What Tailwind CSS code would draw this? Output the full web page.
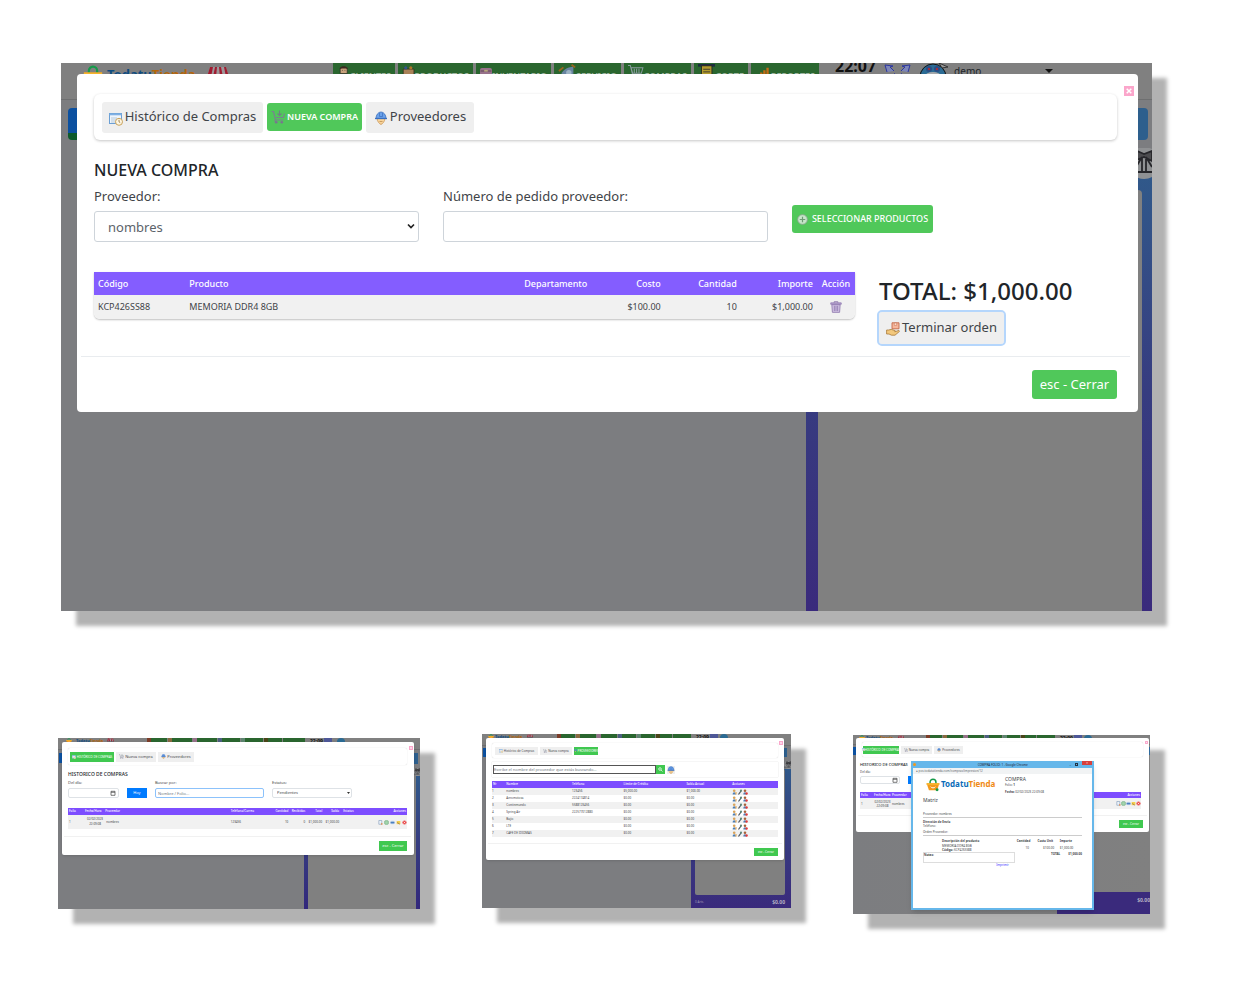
<!DOCTYPE html>
<html lang="es">
<head>
<meta charset="utf-8">
<meta name="viewport" content="width=device-width, initial-scale=1">
<title>TodatuTienda - Compras</title>
<script src="https://cdn.jsdelivr.net/npm/@tailwindcss/browser@4"></script>
</head>
<body class="bg-white font-['Noto_Sans','Open_Sans',sans-serif] text-[#3f4448]">

<!-- Shared icons -->
<svg class="hidden">
  <symbol id="i-history" viewBox="0 0 14 14"><rect x=".5" y="1.5" width="12" height="10" fill="#eef5fc" stroke="#6b9fd4"/><path d="M.5 1.5h12v1.800H.5z" fill="#7fb0e4"/><path d="M2 6h6M2 8h5M2 10h4" stroke="#a9bfd4" stroke-width=".8"/><circle cx="10" cy="9.800" r="3.500" fill="#fdf6e3" stroke="#c9a25a"/><path d="M10 7.800v2l1.200.8" stroke="#8a6a3a" fill="none" stroke-width=".8"/></symbol>
  <symbol id="i-cart" viewBox="0 0 14 14"><path d="M.5 1.500h2l2 8.500h8M4.500 10l-.8 1.500" fill="none" stroke="#7a7f92" stroke-width="1.200"/><path d="M5 7.500h7.500l1-4" fill="none" stroke="#7a7f92" stroke-width="1.100"/><path d="M8.500.5v4.800M6.500 3.500l2 2 2-2" fill="none" stroke="#6f7f86" stroke-width="1.100"/><circle cx="5.200" cy="12.200" r="1.300" fill="#7a7390"/><circle cx="10.800" cy="12.200" r="1.300" fill="#7a7390"/></symbol>
  <symbol id="i-worker" viewBox="0 0 14 14"><path d="M3 7.500h8c0 2.500-2.500 5.500-4 6-1.500-.5-4-3.500-4-6z" fill="#f8d49a" stroke="#c9975a" stroke-width=".8"/><path d="M2 7.500a5 6.500 0 0 1 10 0z" fill="#6ba2ea" stroke="#3a6fbe" stroke-width=".8"/><path d="M1 7.500h12" stroke="#3a6fbe" stroke-width="1.300"/><path d="M5.500 2v3.500h3V2" fill="none" stroke="#3a6fbe" stroke-width=".7"/><path d="M5.500 10.500h3" stroke="#b5844a" stroke-width=".7"/></symbol>
  <symbol id="i-plus" viewBox="0 0 12 12"><circle cx="6" cy="6" r="5.300" fill="#c5e6c8" stroke="#8aa58e"/><path d="M6 3v6M3 6h6" stroke="#6d9a74" stroke-width="1.300"/></symbol>
  <symbol id="i-trash" viewBox="0 0 13 13"><path d="M4.500 2V.8h4V2" fill="none" stroke="#8d76ad"/><path d="M.8 2h11.400v1.600H.8z" fill="#b9a6d2" stroke="#8d76ad" stroke-width=".8"/><path d="M2 4h9l-.6 8.300H2.600z" fill="#d2c4e4" stroke="#8d76ad" stroke-width=".9"/><path d="M4.700 5.200v5.800M6.500 5.200v5.800M8.300 5.200v5.800" stroke="#8d76ad" stroke-width=".9"/></symbol>
  <symbol id="i-hand" viewBox="0 0 14 14"><path d="M6 .8h7v6H6z" fill="#f6b79c" stroke="#c4694a" stroke-width=".9"/><path d="M8.300 1h2.400v2.400H8.300z" fill="#fbe1d0" stroke="#c4694a" stroke-width=".5"/><path d="M.6 8h2l2.600-.6 4 1.200-.4 1.200 4-1.400.8.900-4.600 3.900H5.500L3 12H.6z" fill="#f3c87c" stroke="#a87838" stroke-width=".8"/></symbol>
  <symbol id="i-bag" viewBox="0 0 24 24"><path d="M7 10V7a5 5 0 0 1 10 0v3" fill="none" stroke="#169a4a" stroke-width="2.600"/><path d="M1 9h22l-4 12H5z" fill="#f39a1c"/><path d="M1 9h22v3H1z" fill="#f7b42c"/><path d="M8 15a4.500 3.500 0 0 0 8 0" fill="none" stroke="#fff" stroke-width="1.600"/><circle cx="19" cy="20" r="2.500" fill="#169a4a"/></symbol>
  <symbol id="i-awning" viewBox="0 0 22 16"><path d="M3 1h16l3 10H0z" fill="#9d979a"/><path d="M3 1h3l-2 10H0zM8 1h2l-1 10H6zM12 1h2l2 10h-3zM17 1h2l3 10h-3z" fill="#a01c30"/><path d="M1 11h20v5H1z" fill="#5a5a5e"/></symbol>
  <symbol id="i-cal" viewBox="0 0 6 6"><path d="M1 1.300h4v4H1zM1 2.300h4" fill="none" stroke="#444" stroke-width=".7"/></symbol>
  <symbol id="i-doc" viewBox="0 0 6 6"><path d="M1 .6h3.500v4.500H1z" fill="#eef4fb" stroke="#6a89ad" stroke-width=".6"/><circle cx="4.500" cy="4.700" r="1" fill="#e0905a"/></symbol>
  <symbol id="i-recv" viewBox="0 0 6 6"><rect x=".8" y=".8" width="4.400" height="4.400" rx="1" fill="#a4d4ae" stroke="#4f9a60" stroke-width=".6"/></symbol>
  <symbol id="i-print" viewBox="0 0 6 6"><path d="M1.500.8h3v4.400h-3z" fill="#d5e4f3"/><path d="M.6 2h4.800v2.200H.6z" fill="#4b7fc0"/></symbol>
  <symbol id="i-edit" viewBox="0 0 6 6"><path d="M.8 1.200h4.400v3.800H.8z" fill="#f5d04c"/><path d="M1.500 3l3 2" stroke="#8a6a5a" stroke-width=".9"/></symbol>
  <symbol id="i-cancel" viewBox="0 0 6 6"><circle cx="3" cy="3" r="2.500" fill="#ea4d4d"/><path d="M1.900 1.900l2.200 2.200M4.100 1.900L1.900 4.100" stroke="#fff" stroke-width=".7"/></symbol>
  <symbol id="i-acts" viewBox="0 0 16 6"><circle cx="2.200" cy="1.700" r="1.300" fill="#d9a35a"/><path d="M.6 5.600c0-3 3.200-3 3.200 0z" fill="#4f7fb4"/><path d="M4 3v2.500" stroke="#e8a040"/><path d="M6.500 5.500L9 2" stroke="#49505a" stroke-width="1.200"/><circle cx="9" cy="1.700" r="1.100" fill="#5c8a7c"/><circle cx="13" cy="1.700" r="1.300" fill="#a8623a"/><path d="M11.300 5.600c0-3 3.200-3 3.200 0z" fill="#4f7fb4"/><circle cx="14.600" cy="4.500" r="1.200" fill="#e23b3b"/></symbol>
  <symbol id="i-x" viewBox="0 0 10 10"><path d="M0 0h10v10H0z" fill="#fba6cb"/><path d="M2.700 2.700l4.600 4.600M7.300 2.700L2.700 7.300" stroke="#fff" stroke-width="1.500"/></symbol>
  <symbol id="i-bow" viewBox="0 0 24 30"><circle cx="16" cy="14" r="16" fill="#8f9193"/><path d="M16 5L9 2 6 12l10-4 8 4V2zM14 8L8 18M18 8l6 10M14 9v15M18 9v15M0 23h24" fill="#4c4c4f" stroke="#26262a" stroke-width="1.800"/></symbol>
</svg>

<main class="pt-[63px] pb-[86px]">

  <!-- Main screen -->
  <section class="ml-[61px] mr-[86px] relative min-h-[548px] bg-[#7c7d80] shadow-[15px_15px_4px_#b2b2b2]">
    <div class="absolute inset-0 isolate overflow-hidden flex flex-col">
      <header class="h-[37px] shrink-0 flex items-start bg-[#808080] border-b border-[#6e6f70]">
        <div class="w-[272px] shrink-0 flex pl-[22px] gap-1">
          <svg class="size-5 mt-[2px]"><use href="#i-bag"/></svg>
          <p class="text-[13px] leading-5 mt-px font-bold text-[#0f4c80]">Todatu<span class="text-[#b4660c]">Tienda</span></p>
          <svg class="w-[22px] h-4 mt-[3px] ml-2"><use href="#i-awning"/></svg>
        </div>
        <nav class="flex gap-[3px] text-[9px] leading-[18px] font-semibold text-[#9fb5a2] [&>a]:h-8 [&>a]:bg-[#2a662f] [&>a]:flex [&>a]:justify-between [&>a]:px-1 [&_span]:mt-1 [&_svg]:w-5 [&_svg]:h-4">
          <a href="#" class="w-[62px]"><svg viewBox="0 0 20 16"><path d="M5 6C5 0 16 0 16 6v6H5z" fill="#c8a27c" stroke="#222"/><path d="M4 5c0-6 13-6 13 0l-3-1H8z" fill="#3b2b20"/><path d="M8 7h1M12 7h1" stroke="#111"/></svg><span>CLIENTES</span></a>
          <a href="#" class="w-[75px]"><svg viewBox="0 0 20 16"><path d="M2 5h17v11H2z" fill="#a98258" stroke="#2c2018"/><circle cx="6" cy="3" r="2.500" fill="#33548c"/><circle cx="14" cy="3" r="2.500" fill="#b0742a"/></svg><span>PRODUCTOS</span></a>
          <a href="#" class="w-[75px]"><svg viewBox="0 0 20 16"><rect y="3" width="20" height="12" rx="3" fill="#97718a"/><path d="M1 8h18" stroke="#3c2c38"/><rect x="7" y="6" width="6" height="3" fill="#b8a87c"/></svg><span>INVENTARIO</span></a>
          <a href="#" class="w-[67px]"><svg viewBox="0 0 20 16"><path d="M3 14C4 7 10 4 17 3v12H3z" fill="#6884a0"/><path d="M1 8l5-4M15 1l4 3" stroke="#9c6420" stroke-width="2"/><circle cx="12" cy="10" r="3" fill="#9db4c4"/></svg><span>SERVICIO</span></a>
          <a href="#" class="w-[67px]"><svg viewBox="0 0 20 16"><path d="M0 1h3l3 12h13M4 4h15l-2 7H6zM8 5v6M11 5v6M14 5v6" fill="none" stroke="#8b9ba0" stroke-width="1.300"/></svg><span>COMPRAS</span></a>
          <a href="#" class="w-[54px]"><svg viewBox="0 0 20 16"><path d="M0 0h20v3H0z" fill="#1c2c40"/><path d="M4 2h12v14H4z" fill="#b39b2c" stroke="#222"/><path d="M6 6h8M6 9h8" stroke="#333"/></svg><span>CORTE</span></a>
          <a href="#" class="w-[68px]"><svg viewBox="0 0 20 16"><path d="M8 16v-6M12 16V7M16 16V4" stroke="#c46a14" stroke-width="3"/></svg><span>REPORTES</span></a>
        </nav>
        <p class="ml-4 -mt-2 text-[16px] leading-[22px] font-bold text-[#111]">22:07</p>
        <svg class="w-7 h-3 ml-2" viewBox="0 0 28 12"><path d="M3 9l-2-7 8 1-3 1 4 4M24 9l2-7-8 1 3 1-4 4" fill="#7d86b8" stroke="#2c36a0"/><path d="M10 10l2 2M18 10l-2 2" stroke="#2c36a0" stroke-dasharray="1"/></svg>
        <svg class="w-7 h-6 ml-2" viewBox="0 0 28 24"><ellipse cx="13" cy="14" rx="13" ry="13" fill="#2b6b94" stroke="#111"/><circle cx="9" cy="6" r="3" fill="#2b4b84"/><circle cx="17" cy="6" r="3" fill="#2b4b84"/><circle cx="9" cy="6" r="1" fill="#c22"/><circle cx="17" cy="6" r="1" fill="#c22"/><ellipse cx="13" cy="13" rx="8" ry="4" fill="#a7a9ab"/><path d="M19 0l9 4-6 1z" fill="#999" stroke="#333"/></svg>
        <p class="ml-[6px] text-[10px] leading-4 text-[#20262b]">demo</p>
        <span class="ml-auto mr-[99px] mt-[6px] border-x-4 border-x-transparent border-t-4 border-t-[#111]"></span>
      </header>
      <div class="flex grow">
        <div class="grow pt-2 pl-[7px]"><div class="w-[70%] h-8 rounded bg-[#0b50a0] border-b-[7px] border-[#0d5a2b]"></div></div>
        <div class="w-[346px] flex flex-col">
          <div class="pt-2 pr-1 pb-2"><div class="h-8 rounded bg-[#2d5f8d]"></div></div>
          <svg class="w-6 h-8 -mb-2 ml-auto z-10"><use href="#i-bow"/></svg>
          <div class="grow px-[10px] pl-3 pt-[18px] bg-linear-to-b from-[#30598a] via-[#363c80] to-[#3a2a7c] flex"><div class="grow bg-[#808080] rounded-t"></div></div>
        </div>
      </div>
    </div>

    <!-- Purchase dialog -->
    <div role="dialog" aria-label="Nueva compra" class="absolute left-4 right-[14px] top-[11px] rounded bg-white pt-5 pb-[13px]">
      <button aria-label="Cerrar ventana" class="absolute right-1 top-3 size-[10px]"><svg class="size-[10px]"><use href="#i-x"/></svg></button>
      <div class="pl-[17px] pr-[21px]">
        <nav class="h-[46px] flex items-center gap-1 px-2 rounded-md shadow-[0_1px_3px_#0000003a] text-[13px]">
          <button class="h-[31px] w-[161px] flex items-center justify-center gap-[2px] rounded-[3px] bg-[#efefef] whitespace-nowrap"><svg class="size-[14px] mt-1 shrink-0"><use href="#i-history"/></svg>Histórico de Compras</button>
          <button class="h-[28px] w-[95px] flex items-center justify-center gap-[2px] rounded-[3px] bg-[#50c85a] text-white text-[9px] font-semibold whitespace-nowrap"><svg class="size-[14px] shrink-0"><use href="#i-cart"/></svg>NUEVA COMPRA</button>
          <button class="h-[31px] w-[108px] flex items-center justify-center gap-[2px] rounded-[3px] bg-[#efefef]"><svg class="size-[14px] mt-[2px]"><use href="#i-worker"/></svg>Proveedores</button>
        </nav>
        <h1 class="mt-[18px] text-[16px] leading-6 font-medium text-[#212529]">NUEVA COMPRA</h1>
        <form class="mt-1 grid grid-cols-3 gap-6 text-[13px]">
          <div><label for="prov" class="block leading-5 mb-[5px]">Proveedor:</label>
            <div class="relative"><select id="prov" class="block w-full h-[31px] pl-[13px] rounded-[3px] border border-[#ced4da] bg-white appearance-none text-[#5c636a] pt-[2px]"><option>nombres</option></select>
            <svg class="absolute right-1 top-3 w-2 h-[7px] pointer-events-none" viewBox="0 0 8 7"><path d="M1 1.500l3 3 3-3" fill="none" stroke="#222" stroke-width="1.700"/></svg></div></div>
          <div><label for="pedido" class="block leading-5 mb-[5px]">Número de pedido proveedor:</label>
            <input id="pedido" type="text" class="block w-full h-[31px] px-3 rounded-[3px] border border-[#ced4da]"></div>
          <div class="pt-[19px]"><button type="button" class="h-[28px] w-[141px] flex items-center justify-center gap-1 rounded-[3px] bg-[#50c85a] text-white text-[9px] font-medium whitespace-nowrap"><svg class="size-[11px] shrink-0"><use href="#i-plus"/></svg>SELECCIONAR PRODUCTOS</button></div>
        </form>
        <div class="mt-[30px] grid grid-cols-[761fr_238fr] gap-6">
          <div><table class="w-full table-fixed text-[9px] rounded-b-md shadow-[0_1px_2px_#00000040] overflow-hidden">
            <colgroup><col class="w-[12%]"><col class="w-[44%]"><col class="w-[12%]"><col class="w-[7%]"><col class="w-[10%]"><col class="w-[10%]"><col class="w-[5%]"></colgroup>
            <thead><tr class="h-[23px] bg-[#845dff] text-white [&>th]:font-medium [&>th]:px-1 text-left"><th>Código</th><th>Producto</th><th>Departamento</th><th class="text-right">Costo</th><th class="text-right">Cantidad</th><th class="text-right">Importe</th><th class="text-center">Acción</th></tr></thead>
            <tbody><tr class="h-6 bg-[#f1f1f1] [&>td]:px-1"><td>KCP426SS88</td><td>MEMORIA DDR4 8GB</td><td></td><td class="text-right">$100.00</td><td class="text-right">10</td><td class="text-right">$1,000.00</td><td><button aria-label="Eliminar" class="block mx-auto"><svg class="size-3"><use href="#i-trash"/></svg></button></td></tr></tbody>
          </table></div>
          <div>
            <p class="text-[24px] leading-[38px] font-medium text-[#212529] whitespace-nowrap">TOTAL: $1,000.00</p>
            <button class="mt-[2px] h-8 w-[125px] flex items-center justify-center gap-[2px] rounded-[3px] bg-[#efefef] text-[13px] outline-2 outline-[#b5d6fc] whitespace-nowrap"><svg class="size-[14px] mt-[2px] shrink-0"><use href="#i-hand"/></svg>Terminar orden</button>
          </div>
        </div>
      </div>
      <hr class="mt-3 ml-1 mr-2 border-[#e9ecef]">
      <div class="mt-[13px] pr-[21px] flex justify-end"><button class="h-[29px] w-[85px] rounded-[3px] bg-[#50c85a] text-white text-[13px]">esc - Cerrar</button></div>
    </div>
  </section>

  <!-- Secondary screens -->
  <div class="mt-[123px] ml-[58px] mr-[88px] grid grid-cols-[362fr_309fr_297fr] gap-[62px] items-start text-[4px] leading-[6px]">

    <!-- Purchase history -->
    <section class="mt-1 relative h-[171px] bg-[#7c7d80] shadow-[15px_15px_4px_#b2b2b2]">
      <div class="absolute inset-0 overflow-hidden flex flex-col">
        <div class="h-3 flex gap-px bg-[#808080] border-b border-[#6e6f70] font-bold">
          <p class="w-[88px] shrink-0 pl-2 flex gap-1 text-[#0f4c80]"><svg class="size-[6px]"><use href="#i-bag"/></svg><span>Todatu<span class="text-[#b4660c]">Tienda</span></span><svg class="w-[7px] h-[5px]"><use href="#i-awning"/></svg></p>
          <i class="w-5 h-2 bg-[#2a662f] border-l-4 border-[#7b3c28]"></i><i class="w-6 h-2 bg-[#2a662f] border-l-4 border-[#8a6a40]"></i><i class="w-6 h-2 bg-[#2a662f] border-l-4 border-[#97718a]"></i><i class="w-[22px] h-2 bg-[#2a662f] border-l-4 border-[#4b5f80]"></i><i class="w-[22px] h-2 bg-[#2a662f] border-l-4 border-[#5e8570]"></i><i class="w-[18px] h-2 bg-[#2a662f] border-l-4 border-[#4a4518]"></i><i class="w-[22px] h-2 bg-[#2a662f] border-l-4 border-[#2a662f]"></i>
          <span class="ml-1 text-[5px] leading-[6px] text-[#111]">22:09</span><i class="w-2 h-1 bg-[#4e5898]"></i><i class="w-2 h-2 rounded-full bg-[#2b6b94] ml-1"></i>
        </div>
        <div class="grow flex"><div class="grow pt-[3px] pl-px"><div class="w-10 h-[10px] bg-[#0b50a0]"></div></div>
          <div class="w-[116px] flex flex-col"><div class="pt-[3px] pr-[2px]"><div class="h-[11px] bg-[#2d5f8d]"></div></div><svg class="w-[7px] h-2 ml-auto mt-1"><use href="#i-bow"/></svg>
          <div class="grow px-1 bg-linear-to-b from-[#30598a] via-[#363c80] to-[#32287c] flex"><div class="grow bg-[#808080]"></div></div></div></div>
      </div>
      <div class="absolute left-1 right-[6px] top-1 rounded-xs bg-white pt-[6px] pb-1 pl-[6px] pr-[7px] shadow-sm">
        <button aria-label="Cerrar" class="absolute right-[1px] top-1 size-1"><svg class="block size-1"><use href="#i-x"/></svg></button>
        <nav class="h-[17px] flex items-center gap-[2px] px-[2px] rounded-xs shadow-[0_0_1px_#0000003a]">
          <button class="h-[10px] w-11 flex items-center justify-center gap-px bg-[#40c850] text-white whitespace-nowrap text-[3px]"><svg class="size-1"><use href="#i-history"/></svg>HISTÓRICO DE COMPRAS</button>
          <button class="h-[10px] w-10 flex items-center justify-center gap-px bg-[#efefef]"><svg class="size-[5px]"><use href="#i-cart"/></svg>Nueva compra</button>
          <button class="h-[10px] w-9 flex items-center justify-center gap-px bg-[#efefef]"><svg class="size-[5px]"><use href="#i-worker"/></svg>Proveedores</button>
        </nav>
        <h2 class="mt-[6px] text-[5px] leading-[6px] font-medium text-[#212529]">HISTORICO DE COMPRAS</h2>
        <form class="mt-[3px] grid grid-cols-[51fr_20fr_109fr_80fr_47fr] gap-2 items-end [&>*]:min-w-0">
          <div><label for="dia1" class="block mb-[2px]">Del día:</label><div class="flex border border-[#dee2e6] rounded-xs"><input id="dia1" class="w-0 grow h-2"><svg class="size-[6px] m-px mr-[2px]"><use href="#i-cal"/></svg></div></div>
          <button type="button" class="h-[10px] bg-[#007bff] text-white">Hoy</button>
          <div><label for="bus1" class="block mb-[2px]">Buscar por:</label><input id="bus1" placeholder="Nombre / Folio..." class="block w-full h-[10px] px-[2px] border border-[#8cc2fb] rounded-xs placeholder:text-[#6c757d]"></div>
          <div><label for="est1" class="block mb-[2px]">Estatus:</label><div class="relative"><select id="est1" class="block w-full h-[10px] pl-1 appearance-none border border-[#dee2e6] rounded-xs"><option>Pendientes</option></select><svg class="absolute right-[2px] top-[4px] w-[3px] h-[2px]" viewBox="0 0 3 2"><path d="M0 0h3L1.500 2z" fill="#333"/></svg></div></div>
        </form>
        <table class="mt-[10px] w-full table-fixed text-[3px] leading-[5px] text-left whitespace-nowrap">
          <colgroup><col class="w-[5%]"><col class="w-[6%]"><col class="w-[37%]"><col class="w-[11%]"><col class="w-[6%]"><col class="w-[5%]"><col class="w-[5%]"><col class="w-[5%]"><col class="w-[9%]"><col class="w-[11%]"></colgroup>
          <thead><tr class="h-[7px] bg-[#7d4dff] text-white [&>th]:font-medium"><th class="pl-px">Folio</th><th>Fecha/Hora</th><th>Proveedor</th><th>Teléfono/Correo</th><th class="text-right">Cantidad</th><th class="text-right">Recibidas</th><th class="text-right">Total</th><th class="text-right">Saldo</th><th class="pl-1">Estatus</th><th class="text-right pr-px">Acciones</th></tr></thead>
          <tbody><tr class="h-[14px] bg-[#f1f1f1]"><td class="pl-px">1</td><td class="text-center">02/02/2023<br>22:09:08</td><td class="pl-px">nombres</td><td>123456</td><td class="text-right">10</td><td class="text-right">0</td><td class="text-right">$1,000.00</td><td class="text-right">$1,000.00</td><td></td><td><div class="flex justify-end gap-px [&>svg]:size-[5px]"><svg><use href="#i-doc"/></svg><svg><use href="#i-recv"/></svg><svg><use href="#i-print"/></svg><svg><use href="#i-edit"/></svg><svg><use href="#i-cancel"/></svg></div></td></tr></tbody>
        </table>
        <hr class="mt-[7px] -mx-1 border-[#f1f1f1]">
        <div class="mt-1 flex justify-end"><button class="h-[10px] w-7 bg-[#40c850] text-white">esc - Cerrar</button></div>
      </div>
    </section>

    <!-- Suppliers -->
    <section class="relative h-[174px] bg-[#7c7d80] shadow-[15px_15px_4px_#b2b2b2]">
      <div class="absolute inset-0 overflow-hidden flex flex-col">
        <div class="h-3 flex gap-px bg-[#808080] border-b border-[#6e6f70] font-bold">
          <p class="w-[74px] shrink-0 pl-[6px] flex gap-px text-[#0f4c80]"><svg class="size-[6px]"><use href="#i-bag"/></svg><span>Todatu<span class="text-[#b4660c]">Tienda</span></span><svg class="w-[6px] h-[5px] ml-1"><use href="#i-awning"/></svg></p>
          <i class="w-[18px] h-2 bg-[#2a662f] border-l-4 border-[#7b3c28]"></i><i class="w-5 h-2 bg-[#2a662f] border-l-4 border-[#8a6a40]"></i><i class="w-5 h-2 bg-[#2a662f] border-l-4 border-[#97718a]"></i><i class="w-[18px] h-2 bg-[#2a662f] border-l-4 border-[#4b5f80]"></i><i class="w-[18px] h-2 bg-[#2a662f] border-l-4 border-[#5e8570]"></i><i class="w-4 h-2 bg-[#2a662f] border-l-4 border-[#4a4518]"></i><i class="w-[18px] h-2 bg-[#2a662f] border-l-4 border-[#2a662f]"></i>
          <span class="ml-1 text-[5px] leading-[6px] text-[#111]">22:09</span><i class="w-2 h-1 bg-[#4e5898]"></i><i class="w-2 h-2 rounded-full bg-[#2b6b94] ml-px"></i>
        </div>
        <div class="grow flex"><div class="grow pt-[2px] pl-px"><div class="w-10 h-[9px] bg-[#0b50a0]"></div></div>
          <div class="w-[100px] flex flex-col"><div class="pt-[2px] pr-1"><div class="h-[9px] bg-[#2d5f8d]"></div></div><svg class="w-[7px] h-2 ml-auto mt-1"><use href="#i-bow"/></svg>
          <div class="grow pl-1 pr-[6px] bg-linear-to-b from-[#30598a] via-[#363c80] to-[#3a2a7c] flex flex-col"><div class="grow bg-[#808080] rounded-xs"></div><p class="h-[13px] flex justify-between items-center text-[#a09ab8]"><span class="text-[3px]">0 Arts.</span><b class="text-[5px] text-[#b5b2c4]">$0.00</b></p></div></div></div>
      </div>
      <div class="absolute left-1 right-[7px] top-1 rounded-xs bg-white pt-[5px] pb-1 px-[6px] shadow-sm">
        <button aria-label="Cerrar" class="absolute right-[1px] top-[3px] size-1"><svg class="block size-1"><use href="#i-x"/></svg></button>
        <nav class="h-[15px] flex items-center gap-[2px] px-[3px] rounded-xs shadow-[0_0_1px_#0000003a] whitespace-nowrap">
          <button class="h-2 w-[43px] flex items-center justify-center gap-px bg-[#efefef]"><svg class="size-1 shrink-0"><use href="#i-history"/></svg><span class="text-[3px]">Histórico de Compras</span></button>
          <button class="h-2 w-8 flex items-center justify-center gap-px bg-[#efefef]"><svg class="size-1 shrink-0"><use href="#i-cart"/></svg><span class="text-[3px]">Nueva compra</span></button>
          <button class="h-2 w-6 flex items-center justify-center gap-px bg-[#40c850] text-white text-[3px]"><svg class="size-[3px] shrink-0"><use href="#i-worker"/></svg>PROVEEDORES</button>
        </nav>
        <form class="mt-1 h-[15px] flex items-center shadow-[0_0_1px_#0000003a]">
          <input aria-label="Buscar proveedor" placeholder="Escribe el nombre del proveedor que estás buscando..." class="ml-px w-[57%] h-[9px] border border-[#555] placeholder:text-[#6c757d]">
          <button type="button" aria-label="Buscar" class="h-[9px] w-[9px] bg-[#40c850]"><svg class="block size-[9px]" viewBox="0 0 9 9"><circle cx="4" cy="4" r="1.300" fill="none" stroke="#fff" stroke-width=".7"/><path d="M5 5l1.500 1.500" stroke="#fff" stroke-width=".7"/></svg></button>
          <button type="button" aria-label="Agregar" class="ml-[2px] size-2 bg-[#efefef]"><svg class="block size-2"><use href="#i-worker"/></svg></button>
        </form>
        <table class="mt-1 w-full table-fixed text-[3px] leading-[5px] text-left whitespace-nowrap [&_td]:p-0 [&_tbody>tr]:h-[7px] [&_tbody>tr:nth-child(odd)]:bg-[#f1f1f1] [&_svg]:block [&_svg]:w-4 [&_svg]:h-[6px]">
          <colgroup><col class="w-[5%]"><col class="w-[23%]"><col class="w-[18%]"><col class="w-[22%]"><col class="w-[16%]"><col class="w-[16%]"></colgroup>
          <thead><tr class="h-[7px] bg-[#7d4dff] text-white [&>th]:font-medium"><th class="pl-px">Nº</th><th>Nombre</th><th>Teléfono</th><th>Límite de Crédito</th><th>Saldo Actual</th><th>Acciones</th></tr></thead>
          <tbody>
            <tr><td>1</td><td>nombres</td><td>123456</td><td>$5,000.00</td><td>$1,000.00</td><td><svg><use href="#i-acts"/></svg></td></tr>
            <tr><td>2</td><td>Aeromotosa</td><td>2224174814</td><td>$0.00</td><td>$0.00</td><td><svg><use href="#i-acts"/></svg></td></tr>
            <tr><td>3</td><td>Continmundo</td><td>5588123456</td><td>$0.00</td><td>$0.00</td><td><svg><use href="#i-acts"/></svg></td></tr>
            <tr><td>4</td><td>Spring Air</td><td>222577012880</td><td>$0.00</td><td>$0.00</td><td><svg><use href="#i-acts"/></svg></td></tr>
            <tr><td>5</td><td>Bajio</td><td></td><td>$0.00</td><td>$0.00</td><td><svg><use href="#i-acts"/></svg></td></tr>
            <tr><td>6</td><td>LTE</td><td></td><td>$0.00</td><td>$0.00</td><td><svg><use href="#i-acts"/></svg></td></tr>
            <tr><td>7</td><td>CAFE DE IDIOMAS</td><td></td><td>$0.00</td><td>$0.00</td><td><svg><use href="#i-acts"/></svg></td></tr>
          </tbody>
        </table>
        <hr class="mt-[6px] -mx-1 border-[#f1f1f1]">
        <div class="mt-1 flex justify-end"><button class="h-2 w-6 bg-[#40c850] text-white text-[3px]">esc - Cerrar</button></div>
      </div>
    </section>

    <!-- Purchase receipt -->
    <section class="mt-px relative h-[179px] bg-[#7c7d80] shadow-[15px_15px_4px_#b2b2b2]">
      <div class="absolute inset-0 overflow-hidden flex flex-col">
        <div class="h-[10px] flex gap-px bg-[#808080] border-b border-[#6e6f70] font-bold">
          <p class="w-[72px] shrink-0 pl-[6px] flex gap-px text-[#0f4c80]"><svg class="size-[6px]"><use href="#i-bag"/></svg><span>Todatu<span class="text-[#b4660c]">Tienda</span></span><svg class="w-[6px] h-[5px] ml-1"><use href="#i-awning"/></svg></p>
          <i class="w-4 h-2 bg-[#2a662f] border-l-4 border-[#7b3c28]"></i><i class="w-5 h-2 bg-[#2a662f] border-l-4 border-[#8a6a40]"></i><i class="w-5 h-2 bg-[#2a662f] border-l-4 border-[#97718a]"></i><i class="w-[17px] h-2 bg-[#2a662f] border-l-4 border-[#4b5f80]"></i><i class="w-[17px] h-2 bg-[#2a662f] border-l-4 border-[#5e8570]"></i><i class="w-[15px] h-2 bg-[#2a662f] border-l-4 border-[#4a4518]"></i><i class="w-[18px] h-2 bg-[#2a662f] border-l-4 border-[#2a662f]"></i>
          <span class="ml-1 text-[5px] leading-[6px] text-[#111]">22:09</span><i class="w-2 h-1 bg-[#4e5898]"></i><i class="w-2 h-2 rounded-full bg-[#2b6b94] ml-px"></i>
        </div>
        <div class="grow flex flex-col justify-between bg-linear-to-r from-[#7c7d80] to-[#808080]"><div class="mt-[2px] h-2 bg-linear-to-r from-[#0b50a0] to-[#2d6a9d]"></div>
          <p class="h-[22px] w-[93px] ml-auto bg-[#3a2a7c] pt-1 text-right overflow-hidden"><b class="block text-[5px] leading-[8px] text-[#b5b2c4]">$0.00</b></p></div>
      </div>
      <div class="absolute left-[3px] right-px top-[3px] rounded-xs bg-white pt-1 pb-1 px-[6px]">
        <button aria-label="Cerrar" class="absolute right-[1px] top-[3px] size-[3px]"><svg class="block size-[3px]"><use href="#i-x"/></svg></button>
        <nav class="h-[15px] flex items-center gap-[2px] px-px rounded-xs shadow-[0_0_1px_#0000003a] whitespace-nowrap text-[3px]">
          <button class="h-2 w-9 flex items-center justify-center bg-[#40c850] text-white"><svg class="size-[3px] shrink-0"><use href="#i-history"/></svg>HISTÓRICO DE COMPRAS</button>
          <button class="h-2 w-[31px] flex items-center justify-center gap-px bg-[#efefef]"><svg class="size-1"><use href="#i-cart"/></svg>Nueva compra</button>
          <button class="h-2 w-[29px] flex items-center justify-center gap-px bg-[#efefef]"><svg class="size-1"><use href="#i-worker"/></svg>Proveedores</button>
        </nav>
        <h2 class="mt-[5px] -ml-[2px] text-[4px] leading-[6px] font-medium text-[#212529]">HISTORICO DE COMPRAS</h2>
        <form class="mt-px -ml-[2px] flex items-end gap-2 text-[3px]">
          <div class="w-10"><label for="dia3" class="block mb-px">Del día:</label><div class="flex border border-[#dee2e6] rounded-xs"><input id="dia3" class="w-0 grow h-[6px]"><svg class="size-[6px] mr-px"><use href="#i-cal"/></svg></div></div>
          <button type="button" class="h-2 w-4 bg-[#007bff] text-white">Hoy</button>
        </form>
        <table class="mt-2 -ml-[2px] w-full table-fixed text-[3px] leading-[4px] text-left whitespace-nowrap">
          <colgroup><col class="w-[5%]"><col class="w-[6%]"><col class="w-[72%]"><col class="w-[17%]"></colgroup>
          <thead><tr class="h-[6px] bg-[#7d4dff] text-white [&>th]:font-medium"><th class="pl-px">Folio</th><th>Fecha/Hora</th><th class="pl-px">Proveedor</th><th class="text-right pr-px">Acciones</th></tr></thead>
          <tbody><tr class="h-[11px] bg-[#f1f1f1]"><td class="pl-px">1</td><td class="text-center">02/02/2023<br>22:09:08</td><td class="pl-px">nombres</td><td><div class="flex justify-end [&>svg]:size-[5px]"><svg><use href="#i-doc"/></svg><svg><use href="#i-recv"/></svg><svg><use href="#i-print"/></svg><svg><use href="#i-edit"/></svg><svg><use href="#i-cancel"/></svg></div></td></tr></tbody>
        </table>
        <hr class="mt-[6px] -mx-1 border-[#f1f1f1]">
        <div class="mt-1 flex justify-end"><button class="h-2 w-6 bg-[#40c850] text-white text-[3px]">esc - Cerrar</button></div>
      </div>

      <!-- Print window -->
      <div class="absolute left-[58px] right-14 top-[26px] h-[149px] flex flex-col border-2 border-t-0 border-[#66b7ea] bg-white text-[3px] leading-[4px] shadow-md">
        <div class="h-[7px] shrink-0 flex items-center bg-[#66b7ea] text-[#223]"><i class="size-[3px] bg-[#f39a1c] rounded-full"></i><span class="grow text-center pl-5">COMPRA FOLIO: 1 - Google Chrome</span><span class="mr-1">–</span><i class="size-[3px] border border-[#234] mr-1"></i><span class="w-[10px] h-1 bg-[#d8403c] self-start text-white text-center">×</span></div>
        <p class="h-[6px] shrink-0 bg-[#f1f3f4] pl-[3px] leading-[6px] text-[#5f6368]">● pos.todatutienda.com/compras/impresion/12</p>
        <div class="px-[10px] pt-[2px]">
          <div class="flex">
            <div class="w-[82px] flex gap-px pt-[2px] pl-[3px]"><svg class="size-[14px]"><use href="#i-bag"/></svg><p class="text-[8px] leading-[10px] mt-px font-bold text-[#0a6cb8]">Todatu<span class="text-[#f08a14]">Tienda</span></p></div>
            <div><p class="text-[5px] leading-[6px]">COMPRA</p><p class="leading-[7px]">Folio: <b>1</b></p><p class="leading-[6px]"><b>Fecha:</b> 02/02/2023 22:09:08</p></div>
          </div>
          <h3 class="mt-px text-[5px] leading-[8px]">Matriz</h3>
          <p class="mt-[8px] pb-px border-b border-[#ccc]">Proveedor: nombres</p>
          <p class="mt-[2px] font-bold">Dirección de Envío</p>
          <p>Teléfono:</p>
          <p class="mt-[2px] pb-px border-b border-[#ccc]">Orden Proveedor:</p>
          <table class="w-full table-fixed mt-[3px] text-left">
            <colgroup><col class="w-[12%]"><col class="w-[47%]"><col class="w-[13%]"><col class="w-[14%]"><col class="w-[14%]"></colgroup>
            <thead><tr><th></th><th>Descripción del producto</th><th>Cantidad</th><th>Costo Unit</th><th>Importe</th></tr></thead>
            <tbody><tr><td></td><td class="pt-px">MEMORIA DDR4 8GB<br><b>Código:</b> KCP426SS88</td><td class="text-center">10</td><td class="text-center">$100.00</td><td>$1,000.00</td></tr></tbody>
          </table>
          <div class="flex"><div class="w-[92px] h-[11px] border border-[#ddd]"><b>Notas:</b></div><p class="ml-auto flex gap-2 font-bold"><span>TOTAL</span><span>$1,000.00</span></p></div>
          <p class="text-center"><a href="#" class="text-[#33f]">Imprimir</a></p>
        </div>
      </div>
    </section>
  </div>
</main>
</body>
</html>
